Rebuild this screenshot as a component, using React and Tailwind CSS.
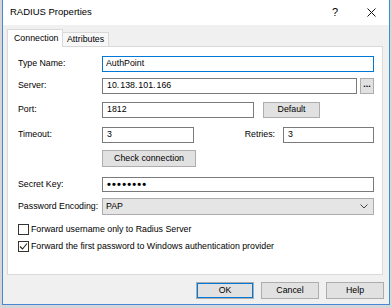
import { useState } from "react";

function Field({ label, children, className = "" }) {
  return (
    <div className={`flex items-center ${className}`}>
      <div className="w-[84px] shrink-0">{label}</div>
      {children}
    </div>
  );
}

function Button({ children, className = "" }) {
  return (
    <button className={`h-[16px] border border-[#adadad] bg-[#e1e1e1] text-black flex items-center justify-center ${className}`}>
      {children}
    </button>
  );
}

function Checkbox({ checked, onChange, label, className = "" }) {
  return (
    <label className={`flex items-center gap-[2px] ${className}`}>
      <span
        onClick={onChange}
        className="w-[11px] h-[11px] border border-[#333] bg-white flex items-center justify-center"
      >
        {checked && (
          <svg width="9" height="9" viewBox="0 0 9 9">
            <path d="M1 4.5 L3.5 7 L8 1.5" fill="none" stroke="#222" strokeWidth="1.1" />
          </svg>
        )}
      </span>
      <span>{label}</span>
    </label>
  );
}

export default function App() {
  const [fwdUser, setFwdUser] = useState(false);
  const [fwdPass, setFwdPass] = useState(true);

  return (
    <div className="w-[392px] h-[308px] bg-[#d6d6d6] px-[2px] pb-[3px] font-['Liberation_Sans',Arial,sans-serif] text-[8.8px] text-black">
      <div className="h-full border-x border-b border-[#4a86d8] bg-[#f0f0f0] flex flex-col">
        {/* title bar */}
        <div className="h-[25px] bg-white flex items-center pl-[7px] shrink-0">
          <span className="text-[9.5px]">RADIUS Properties</span>
          <span className="ml-auto text-[11px] mr-[29px]">?</span>
          <svg width="9" height="9" viewBox="0 0 9 9" className="mr-[13px]">
            <path d="M0.5 0.5 L8.5 8.5 M8.5 0.5 L0.5 8.5" stroke="#111" strokeWidth="1" />
          </svg>
        </div>

        {/* tabs */}
        <div className="flex items-end ml-[4px] mt-[4px] h-[17px]">
          <div className="h-[18px] -mb-px relative z-10 border border-b-0 border-[#d9d9d9] bg-white px-[6px] flex items-center w-[56px]">
            Connection
          </div>
          <div className="h-[14px] border border-b-0 border-l-0 border-[#d9d9d9] bg-[#f7f7f7] px-[4px] flex items-center w-[46px]">
            Attributes
          </div>
        </div>

        {/* panel */}
        <div className="ml-[4px] mr-[6px] h-[229px] border border-[#d9d9d9] bg-white pl-[10px] pr-[8px] pt-[9px] flex flex-col">
          <Field label="Type Name:">
            <div className="flex-1 h-[16px] border border-[#0078d7] flex items-center px-[3px]">AuthPoint</div>
          </Field>
          <Field label="Server:" className="mt-[6px]">
            <div className="flex-1 h-[16px] border border-[#7a7a7a] flex items-center px-[4px] gap-[1px]">
              <span>10.</span><span>138.</span><span>101.</span><span>166</span>
            </div>
            <Button className="w-[14px] h-[14px] ml-[3px] pb-[3px] font-bold">...</Button>
          </Field>
          <Field label="Port:" className="mt-[8px]">
            <div className="w-[152px] h-[16px] border border-[#7a7a7a] flex items-center px-[4px]">1812</div>
            <Button className="w-[57px] ml-[9px]">Default</Button>
          </Field>
          <Field label="Timeout:" className="mt-[9px]">
            <div className="w-[92px] h-[16px] border border-[#7a7a7a] flex items-center px-[4px]">3</div>
            <div className="flex-1 text-right pr-[8px]">Retries:</div>
            <div className="w-[91px] h-[16px] border border-[#7a7a7a] flex items-center px-[4px]">3</div>
          </Field>
          <Field label="" className="mt-[7px]">
            <Button className="w-[94px] h-[17px]">Check connection</Button>
          </Field>
          <Field label="Secret Key:" className="mt-[10px]">
            <div className="flex-1 h-[15px] border border-[#7a7a7a] flex items-center px-[4px] text-[11px] tracking-[1.2px] font-bold">
              ••••••••
            </div>
          </Field>
          <Field label="Password Encoding:" className="mt-[6px]">
            <div className="flex-1 h-[17px] border border-[#acacac] bg-[#e5e5e5] flex items-center px-[3px]">
              <span>PAP</span>
              <svg width="8" height="5" viewBox="0 0 8 5" className="ml-auto mr-[2px]">
                <path d="M0.5 0.5 L4 4 L7.5 0.5" fill="none" stroke="#444" strokeWidth="1" />
              </svg>
            </div>
          </Field>
          <Checkbox
            className="mt-[8px]"
            checked={fwdUser}
            onChange={() => setFwdUser(!fwdUser)}
            label="Forward username only to Radius Server"
          />
          <Checkbox
            className="mt-[4px]"
            checked={fwdPass}
            onChange={() => setFwdPass(!fwdPass)}
            label="Forward the first password to Windows authentication provider"
          />
        </div>

        {/* dialog buttons */}
        <div className="flex justify-end gap-[7px] mt-[7px] mr-[5px]">
          <Button className="w-[58px] h-[17px] border-[#0078d7] shadow-[inset_0_0_0_1px_#0078d7]">OK</Button>
          <Button className="w-[58px] h-[17px]">Cancel</Button>
          <Button className="w-[58px] h-[17px]">Help</Button>
        </div>
      </div>
    </div>
  );
}
